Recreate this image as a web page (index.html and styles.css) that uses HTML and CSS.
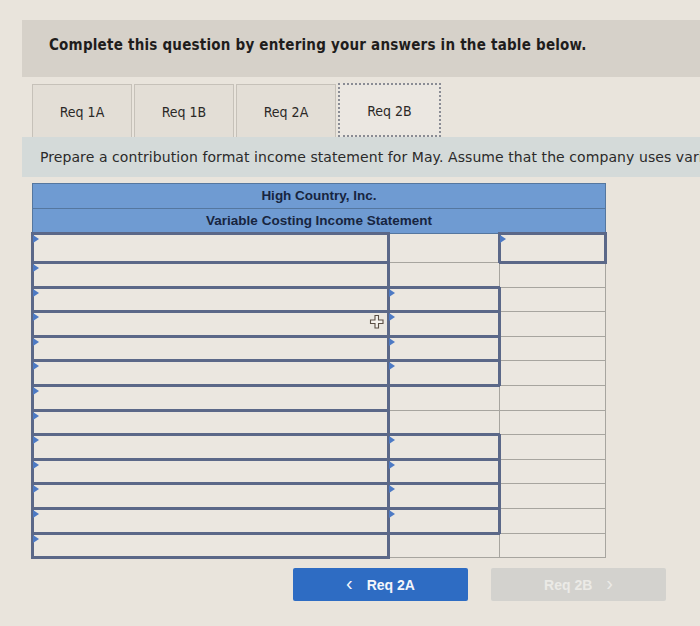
FILE: index.html
```html
<!DOCTYPE html>
<html>
<head>
<meta charset="utf-8">
<link rel="stylesheet" href="styles.css">
</head>
<body>
<div class="page">
  <div class="instruction">Complete this question by entering your answers in the table below.</div>
  <div class="tabs">
    <div class="tab">Req 1A</div>
    <div class="tab">Req 1B</div>
    <div class="tab">Req 2A</div>
    <div class="tab active">Req 2B</div>
  </div>
  <div class="prompt">Prepare a contribution format income statement for May. Assume that the company uses variable costing.</div>
  <div class="sheet">
    <table class="stmt">
      <colgroup><col class="c1"><col class="c2"><col class="c3"></colgroup>
      <thead>
        <tr><th colspan="3">High Country, Inc.</th></tr>
        <tr><th colspan="3">Variable Costing Income Statement</th></tr>
      </thead>
      <tbody>
        <tr class="first"><td class="in"></td><td></td><td class="in"></td></tr>
        <tr><td class="in"></td><td></td><td></td></tr>
        <tr><td class="in"></td><td class="in"></td><td></td></tr>
        <tr><td class="in"></td><td class="in"></td><td></td></tr>
        <tr><td class="in"></td><td class="in"></td><td></td></tr>
        <tr><td class="in"></td><td class="in"></td><td></td></tr>
        <tr><td class="in"></td><td></td><td></td></tr>
        <tr><td class="in"></td><td></td><td></td></tr>
        <tr><td class="in"></td><td class="in"></td><td></td></tr>
        <tr><td class="in"></td><td class="in"></td><td></td></tr>
        <tr><td class="in"></td><td class="in"></td><td></td></tr>
        <tr><td class="in"></td><td class="in"></td><td></td></tr>
        <tr><td class="in"></td><td></td><td></td></tr>
      </tbody>
    </table>
    <svg class="cursor" width="16" height="16" viewBox="0 0 16 16">
      <path d="M6 1.5h3.5v4.5h4.5v3.5h-4.5v4.5h-3.5v-4.5h-4.5v-3.5h4.5z" fill="#f6f3ee" stroke="#5b4f45" stroke-width="1.1"/>
    </svg>
  </div>
  <div class="nav">
    <button class="btn prev"><span class="chev">&lsaquo;</span>Req 2A</button>
    <button class="btn next">Req 2B<span class="chev">&rsaquo;</span></button>
  </div>
</div>
</body>
</html>
```
FILE: styles.css
```css
html, body {
  margin: 0;
  padding: 0;
}
body {
  background: #e9e4dc;
  width: 700px;
  height: 626px;
  overflow: hidden;
}
.page {
  padding: 20px 0 0 22px;
}
.instruction {
  background: #d6d1c9;
  height: 57px;
  box-sizing: border-box;
  padding: 16px 0 0 27px;
  font-family: "DejaVu Sans Condensed", "DejaVu Sans", sans-serif;
  font-weight: bold;
  font-size: 15px;
  letter-spacing: 0.22px;
  color: #1f1d1c;
  white-space: nowrap;
}
.tabs {
  display: flex;
  gap: 2px;
  margin: 7px 0 0 10px;
  height: 53px;
}
.tab {
  width: 100px;
  box-sizing: border-box;
  border: 1px solid #c6c1b9;
  border-bottom: none;
  background: #e3ded6;
  display: flex;
  align-items: center;
  justify-content: center;
  font-family: "DejaVu Sans Condensed", "DejaVu Sans", sans-serif;
  font-size: 14px;
  color: #2a2826;
  padding-top: 2px;
}
.tab.active {
  width: 103px;
  background: #ebe7e1;
  border: 2px dotted #8a8c94;
  margin-top: -1px;
}
.prompt {
  background: #d4dad9;
  height: 40px;
  box-sizing: border-box;
  padding: 12px 0 0 18px;
  font-family: "DejaVu Sans", sans-serif;
  font-size: 14px;
  letter-spacing: 0.08px;
  color: #2b2a2a;
  white-space: nowrap;
  overflow: hidden;
}
.sheet {
  position: relative;
  margin: 6px 0 0 9px;
  width: 573px;
}
.stmt {
  border-collapse: collapse;
  width: 573px;
  table-layout: fixed;
}
.c1 { width: 356px; }
.c2 { width: 111px; }
.c3 { width: 106px; }
.stmt th {
  background: #6f9bd2;
  border: 1px solid #55779f;
  height: 23.5px;
  padding: 0;
  font-family: "Liberation Sans", Arial, sans-serif;
  font-weight: bold;
  font-size: 13.5px;
  color: #17253f;
  text-align: center;
}
.stmt td {
  border: 1px solid #a7a59f;
  height: 21.6px;
  padding: 0;
  position: relative;
  background: #ebe7e0;
}
.stmt tr.first td {
  height: 26px;
}
.stmt td.in {
  border: 3px solid #5b6888;
}
.stmt td.in::before {
  content: "";
  position: absolute;
  left: -1px;
  top: 0;
  border-left: 6px solid #4d7ac4;
  border-top: 4px solid transparent;
  border-bottom: 4px solid transparent;
}
.cursor {
  position: absolute;
  left: 338px;
  top: 131px;
}
.nav {
  display: flex;
  gap: 23px;
  margin: 9px 0 0 271px;
}
.btn {
  width: 175px;
  height: 33px;
  border: none;
  border-radius: 2px;
  font-family: "Liberation Sans", Arial, sans-serif;
  font-weight: bold;
  font-size: 14px;
  display: flex;
  align-items: center;
  justify-content: center;
  padding: 0;
}
.btn.prev {
  background: #2e6cc3;
  color: #f4f6fa;
}
.btn.next {
  background: #d3d2ce;
  color: #ebeae6;
}
.chev {
  font-size: 20px;
  font-weight: normal;
  line-height: 1;
  margin-bottom: 3px;
}
.prev .chev { margin-right: 14px; }
.next .chev { margin-left: 14px; }
```
